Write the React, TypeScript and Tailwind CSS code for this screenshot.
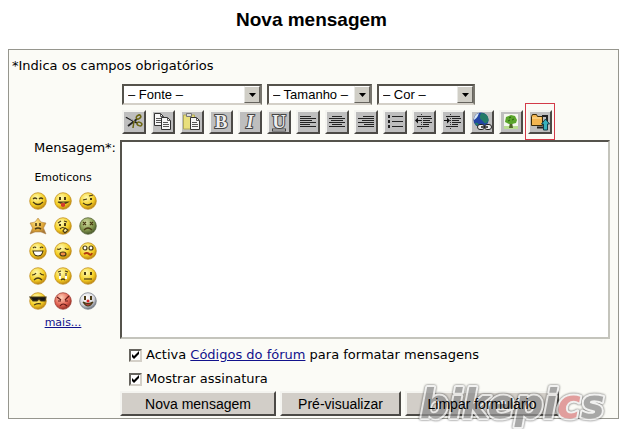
import { useState } from 'react';
import type { ReactNode } from 'react';
import clsx from 'clsx';

const BEVEL = 'border-2 border-t-[#f4f4f0] border-l-[#f4f4f0] border-r-[#4c4a46] border-b-[#4c4a46]';

function Lines({ rows }: { rows: number[][] }) {
  return (
    <g stroke="#222" strokeWidth="1">
      {rows.map(([x1, x2, y]) => (
        <path key={y} d={`M${x1} ${y}.5H${x2}`} />
      ))}
    </g>
  );
}

function Page({ x, y }: { x: number; y: number }) {
  return (
    <g transform={`translate(${x} ${y})`}>
      <path d="M.5 .5h6l3 3v9h-9z" fill="#f6f6f6" stroke="#333" />
      <path d="M6.5 .5v3h3M2 5.5h5M2 7.5h6M2 9.5h6" fill="none" stroke="#555" />
    </g>
  );
}

function Letter({ children, className }: { children: string; className?: string }) {
  return (
    <text
      x="10"
      y="16"
      textAnchor="middle"
      fontSize="19"
      fill="#eee"
      stroke="#444"
      strokeWidth="2"
      paintOrder="stroke"
      className={clsx("font-['Liberation_Serif',serif] font-bold", className)}
    >
      {children}
    </text>
  );
}

const tools: { name: string; icon: ReactNode }[] = [
  {
    name: 'Cortar',
    icon: (
      <>
        <path d="M2 5l11 6M4 14l9-7" stroke="#222" strokeWidth="1.8" />
        <path d="M2 4l9 5.500" stroke="#eee" strokeWidth=".7" />
        <ellipse cx="14.500" cy="5" rx="2.500" ry="1.700" fill="none" stroke="#6b6510" strokeWidth="1.500" transform="rotate(-35 14.500 5)" />
        <ellipse cx="15.500" cy="12" rx="2.500" ry="1.700" fill="none" stroke="#6b6510" strokeWidth="1.500" transform="rotate(20 15.500 12)" />
        <path d="M10 9l-1 7" stroke="#6b6510" strokeWidth="1.500" />
      </>
    ),
  },
  { name: 'Copiar', icon: <><Page x={1} y={1} /><Page x={8} y={5} /></> },
  {
    name: 'Colar',
    icon: (
      <>
        <path d="M1.500 3h11v14h-11z" fill="#e8df7c" stroke="#b0a95a" />
        <path d="M4.500 1.500h5v3h-5z" fill="#ddd" stroke="#777" />
        <Page x={8} y={5} />
      </>
    ),
  },
  { name: 'Negrito', icon: <Letter>B</Letter> },
  { name: 'Itálico', icon: <Letter className="italic">I</Letter> },
  { name: 'Sublinhado', icon: <><Letter>U</Letter><path d="M3 18h14" stroke="#444" strokeWidth="3" /><path d="M4 18h12" stroke="#eee" /></> },
  { name: 'Alinhar à esquerda', icon: <Lines rows={[[2, 13, 4], [2, 18, 6], [2, 14, 8], [2, 18, 10], [2, 12, 12], [2, 18, 14]]} /> },
  { name: 'Centrar', icon: <Lines rows={[[5, 15, 4], [2, 18, 6], [4, 16, 8], [2, 18, 10], [5, 15, 12], [2, 18, 14]]} /> },
  { name: 'Alinhar à direita', icon: <Lines rows={[[7, 18, 4], [2, 18, 6], [6, 18, 8], [2, 18, 10], [8, 18, 12], [2, 18, 14]]} /> },
  {
    name: 'Lista',
    icon: (
      <>
        <path d="M3 3h2v3H3zM3 8h2v3H3zM3 13h2v3H3z" fill="#222" />
        <Lines rows={[[7, 18, 4], [7, 18, 9], [7, 18, 14]]} />
      </>
    ),
  },
  {
    name: 'Diminuir avanço',
    icon: (
      <>
        <Lines rows={[[3, 17, 4], [9, 18, 6], [9, 16, 8], [9, 18, 10], [9, 15, 12], [3, 15, 14]]} />
        <path d="M7 8.500H3" stroke="#111" />
        <path d="M1 8.500l3-3v6z" fill="#111" />
        <path d="M7.500 2v15" stroke="#333" strokeDasharray="1 1" />
      </>
    ),
  },
  {
    name: 'Aumentar avanço',
    icon: (
      <>
        <Lines rows={[[3, 17, 4], [9, 18, 6], [9, 16, 8], [9, 18, 10], [9, 15, 12], [3, 15, 14]]} />
        <path d="M1 8.500h4" stroke="#111" />
        <path d="M7 8.500l-3-3v6z" fill="#111" />
        <path d="M7.500 2v15" stroke="#333" strokeDasharray="1 1" />
      </>
    ),
  },
  {
    name: 'Ligação',
    icon: (
      <>
        <circle cx="9" cy="8" r="7.500" fill="#2244a4" />
        <path d="M9 1c5 0 8 3 7.500 8-2 3-4 3-5 1S7 7 8 4zM3 11c3-1 4 1 4 3-2 0-4-1-4-3z" fill="#237b67" />
        <path d="M2 8c0-4 2-6 5-7-1 3-2 5-5 7z" fill="#d9e8f4" />
        <rect x="5.500" y="12.500" width="7" height="5" rx="2.500" fill="#eee" stroke="#222" />
        <rect x="12.500" y="12.500" width="7" height="5" rx="2.500" fill="#eee" stroke="#222" />
        <path d="M9 15h7" stroke="#222" strokeWidth="1.500" />
      </>
    ),
  },
  {
    name: 'Imagem',
    icon: (
      <>
        <path d="M3 2h14v15H3z" fill="#f4f7ee" />
        <path d="M3 14h14v3H3z" fill="#b9de91" />
        <path d="M9 10h2l1 6H8z" fill="#50652a" />
        <path d="M10 3l4 1 2 4-1 3-4 1H8l-4-2 1-5z" fill="#5aa52b" />
        <path d="M8 6l2-1M11 8l2-1M7 9l2-1" stroke="#28630f" />
      </>
    ),
  },
  {
    name: 'Anexar',
    icon: (
      <>
        <path d="M1.500 4.500l1-2h4l1 2h5v9h-11z" fill="#f2b550" stroke="#3a2b08" />
        <path d="M2 6h9" stroke="#ffe1a0" />
        <path d="M7 15.500h8M12 4h5v6" fill="none" stroke="#222" strokeWidth="2" />
        <path d="M15.500 7l4 5h-2v6h-4v-6h-2z" fill="#38b2bd" stroke="#163e48" />
      </>
    ),
  },
];

// Eyes and mouth for each face, drawn on an 18x18 grid
const faces: { name: string; tone?: 'green' | 'red' | 'white' | 'star'; features: ReactNode }[] = [
  { name: 'sorriso', features: <path d="M4 7q2-2 4 0M10 7q2-2 4 0M4 10q5 5 10 0" /> },
  { name: 'língua de fora', features: <><path d="M6 5v3M11 5v3" strokeWidth="2" /><path d="M4 10h10q-4 3-10 0z" /><path d="M7 11h4v3q-2 2-4 0z" fill="#d33b2c" stroke="none" /></> },
  { name: 'piscar', features: <><path d="M4 8l4-1M10 4l4-1M4 11q5 4 9 0" /><path d="M12 6v2" strokeWidth="2" /></> },
  { name: 'estrela', tone: 'star', features: <path d="M7 6v3M11 6v3M6 12q3-2 6 0" strokeWidth="1.600" /> },
  { name: 'pensativo', features: <><path d="M4 6l3-2M10 4l3 1M6 12q3-3 5 0" /><path d="M6 7v2M11 6v3" strokeWidth="2" /><path d="M11 11l3 2-3 3-2-2z" fill="#fff2a0" /></> },
  { name: 'enjoado', tone: 'green', features: <path d="M4 5l3 3M7 5L4 8M11 5l3 3M14 5l-3 3M5 13q4-4 8 0" /> },
  { name: 'gargalhada', features: <><path d="M4 6q2-2 3 0M11 6q2-2 3 0" /><path d="M4 9h10q-1 5-5 5t-5-5z" fill="#fff" /></> },
  { name: 'choro', features: <><path d="M3 7q3 1 4-1M11 6q1 2 4 1" /><ellipse cx="9" cy="12" rx="3" ry="2" fill="#f28b45" /></> },
  { name: 'confuso', features: <><circle cx="6" cy="6" r="2" fill="#fff" /><circle cx="12" cy="6" r="2" fill="#fff" /><path d="M5 12q3-2 5 0t3-1" stroke="#b33a12" strokeWidth="2" /></> },
  { name: 'triste', features: <path d="M3 8q3 0 4-2M11 6q1 2 4 2M5 13q4-4 8 0" /> },
  { name: 'lágrimas', features: <><path d="M4 5l3-1M11 4l3 1M7 13q2-2 4 0" /><path d="M6 7v5M12 7v5" stroke="#fff" strokeWidth="2" /><path d="M6 6v3M12 6v3" /></> },
  { name: 'indiferente', features: <><path d="M5 12h8" /><path d="M6 5v3M12 5v3" strokeWidth="2" /></> },
  { name: 'óculos de sol', features: <><path d="M1 5h16l-1 4h-4l-2-2-2 2H4z" fill="#161616" /><path d="M5 13q4-2 7-1" /></> },
  { name: 'zangado', tone: 'red', features: <path d="M3 5l4 3M15 4l-4 4M4 9h3M11 9h3M6 14q3-4 7 0" stroke="#661b17" /> },
  { name: 'palhaço', tone: 'white', features: <><path d="M6 4v4M12 4v4" strokeWidth="2" /><path d="M4 10q5 8 10 0-5 3-10 0z" fill="#b33838" /><circle cx="9" cy="9" r="1.500" fill="#d22" stroke="none" /></> },
];

const TONES = {
  yellow: ['#fffbb0', '#f5cf24', '#bd8612'],
  green: ['#d2dda0', '#82964c', '#4a592d'],
  red: ['#ffd0b8', '#e26352', '#993429'],
  white: ['#ffffff', '#d6d6dc', '#6d7480'],
  star: ['#ffe480', '#dda435', '#a8793a'],
};

function Face({ tone = 'yellow', children }: { tone?: keyof typeof TONES; children: ReactNode }) {
  const [light, mid, dark] = TONES[tone];
  return (
    <svg viewBox="0 0 18 18" className="size-[18px]" aria-hidden="true">
      <defs>
        <radialGradient id={`face-${tone}`} cx="40%" cy="30%" r="70%">
          <stop offset="0" stopColor={light} />
          <stop offset=".65" stopColor={mid} />
          <stop offset="1" stopColor={dark} />
        </radialGradient>
      </defs>
      {tone === 'star' ? (
        <path d="M9 1l3 4 5 1-2.500 5L17 17l-5-2H6l-5 2 2.500-6L1 6l5-1z" fill="url(#face-star)" stroke={dark} strokeWidth=".5" />
      ) : (
        <circle cx="9" cy="9" r="8.300" fill={`url(#face-${tone})`} stroke={dark} strokeWidth=".7" />
      )}
      <g fill="none" stroke="#493a14" strokeWidth="1.200">{children}</g>
    </svg>
  );
}

function FormatSelect({ label, text, className }: { label: string; text: string; className: string }) {
  return (
    <div className={clsx('relative', className)}>
      <select
        aria-label={label}
        className="block h-[21px] w-full appearance-none border-2 border-t-[#55534c] border-l-[#55534c] border-r-[#77756d] border-b-[#d4d0c8] bg-white pl-1 font-['Liberation_Sans',sans-serif] text-[13px] leading-4 text-black"
      >
        <option>{text}</option>
      </select>
      <span className="pointer-events-none absolute inset-y-0.5 right-0.5 flex w-4 items-center justify-center border border-t-white border-l-[#e8e8e4] border-r-[#66645e] border-b-[#66645e] bg-[#d0cec6]">
        <svg viewBox="0 0 7 4" className="h-1 w-[7px]" aria-hidden="true">
          <path d="M0 0h7L3.500 4z" />
        </svg>
      </span>
    </div>
  );
}

function Option({ id, children }: { id: string; children: ReactNode }) {
  const [on, setOn] = useState(true);
  return (
    <div className="flex h-6 items-center gap-1">
      <span className="relative flex">
        <input
          id={id}
          type="checkbox"
          checked={on}
          onChange={() => setOn(!on)}
          className="size-[13px] appearance-none border-2 border-t-[#66645e] border-l-[#66645e] border-r-[#d4d0c8] border-b-[#d4d0c8] bg-white"
        />
        {on && (
          <svg viewBox="0 0 13 13" className="pointer-events-none absolute inset-0" aria-hidden="true">
            <path d="M3 5v3l2 2 5-5V2L5 7z" />
          </svg>
        )}
      </span>
      <label htmlFor={id}>{children}</label>
    </div>
  );
}

function FormButton({ className, children }: { className: string; children: string }) {
  return (
    <button
      type="button"
      className={clsx("h-[25px] bg-[#d2cec8] font-['Liberation_Sans',sans-serif] text-sm leading-5", BEVEL, className)}
    >
      {/* the label stays readable above the watermark */}
      <span className="relative z-10">{children}</span>
    </button>
  );
}

export default function App() {
  return (
    <main className="min-h-screen bg-white px-2 pt-2 font-['DejaVu_Sans',sans-serif] text-[13px] text-black">
      <h1 className="pr-3 text-center font-['Liberation_Sans',sans-serif] text-[19px] leading-6 font-bold">Nova mensagem</h1>

      <form className="relative mt-[17px] mr-2 border border-[#96968e] bg-[#fbfbf6] pr-2 pb-0.5 pl-[3px]">
        <p className="pt-2 leading-4">*Indica os campos obrigatórios</p>

        <div className="mt-2.5 flex">
          <div className="w-[108px] shrink-0 pt-14">
            <label htmlFor="message" className="block pr-1 text-right leading-4">Mensagem*:</label>
            <div className="mt-3 w-[102px] text-center">
              <h2 className="text-[11px] leading-5">Emoticons</h2>
              <div className="mx-auto grid w-[75px] grid-cols-3">
                {faces.map((f) => (
                  <button key={f.name} type="button" aria-label={f.name} className="flex h-[25px] items-center justify-center">
                    <Face tone={f.tone}>{f.features}</Face>
                  </button>
                ))}
              </div>
              <a href="#mais" className="block text-[11px] leading-5 text-[#12128c] underline">mais...</a>
            </div>
          </div>

          <div className="min-w-0 flex-1">
            <div className="flex gap-[5px] pl-0.5">
              <FormatSelect label="Fonte" text="– Fonte –" className="w-[140px]" />
              <FormatSelect label="Tamanho" text="– Tamanho –" className="w-[105px]" />
              <FormatSelect label="Cor" text="– Cor –" className="w-[98px]" />
            </div>

            <div className="mt-[5px] flex gap-[5px] pl-0.5">
              {tools.map((t) => (
                <button
                  key={t.name}
                  type="button"
                  aria-label={t.name}
                  className={clsx('relative flex size-6 items-center justify-center bg-[#bebebe]', BEVEL)}
                >
                  <svg viewBox="0 0 20 20" className="size-5" aria-hidden="true">{t.icon}</svg>
                  {t.name === 'Anexar' && (
                    <span className="pointer-events-none absolute -inset-x-[5px] -top-[9px] -bottom-2 border border-[#d33a48]" />
                  )}
                </button>
              ))}
            </div>

            <textarea
              id="message"
              className="mt-1.5 block h-[199px] w-full resize-none border-2 border-t-[#55534c] border-l-[#55534c] border-r-[#c4c4bc] border-b-[#c4c4bc] bg-white p-1"
            />

            <div className="pt-1 pl-[9px]">
              <Option id="codes">
                Activa <a href="#codigos" className="text-[#12128c] underline">Códigos do fórum</a> para formatar mensagens
              </Option>
              <Option id="signature">Mostrar assinatura</Option>
            </div>

            <div className="flex gap-1">
              <FormButton className="w-[156px]">Nova mensagem</FormButton>
              <FormButton className="w-[121px]">Pré-visualizar</FormButton>
              <FormButton className="w-[154px]">Limpar formulário</FormButton>
            </div>
          </div>
        </div>

        {/* Watermark */}
        <svg viewBox="0 0 204 44" className="pointer-events-none absolute right-0 -bottom-2.5 h-11 w-[204px] overflow-visible opacity-75" aria-label="bikepics">
          <text
            x="6"
            y="34"
            fontSize="40"
            fill="#8c8c8c"
            stroke="#eeeeee"
            strokeWidth="4"
            strokeLinejoin="round"
            paintOrder="stroke"
            className="font-['DejaVu_Sans',sans-serif] font-bold italic drop-shadow-[0_0_1px_#222]"
          >
            bikepi<tspan fill="#d98080">c</tspan>s
          </text>
        </svg>
      </form>
    </main>
  );
}
